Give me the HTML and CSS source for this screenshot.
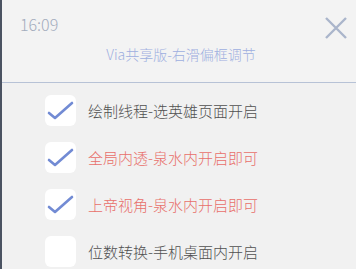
FILE: index.html
```html
<!DOCTYPE html>
<html lang="zh">
  <head>
    <meta charset="UTF-8" />
    <title>Via共享版</title>
    <link rel="stylesheet" href="styles.css">
  </head>

  <body>
    <div class="panel">
      <!-- 顶部 -->
      <div class="header">
        <div class="bar">
          <span class="time">16:09</span>
          <svg class="close" width="22" height="22" viewBox="0 0 22 22">
            <path d="M1 1 L21 21 M21 1 L1 21" stroke="#aab5cb" stroke-width="2.4" fill="none" />
          </svg>
        </div>
        <div class="title">Via共享版-右滑偏框调节</div>
      </div>

      <!-- 选项 -->
      <div class="list">
        <div class="item">
          <span class="box on"><svg viewBox="0 0 31 31"><path d="M4 18 L10 23 L27 8" /></svg></span>
          <span class="label">绘制线程-选英雄页面开启</span>
        </div>
        <div class="item red">
          <span class="box on"><svg viewBox="0 0 31 31"><path d="M4 18 L10 23 L27 8" /></svg></span>
          <span class="label">全局内透-泉水内开启即可</span>
        </div>
        <div class="item red">
          <span class="box on"><svg viewBox="0 0 31 31"><path d="M4 18 L10 23 L27 8" /></svg></span>
          <span class="label">上帝视角-泉水内开启即可</span>
        </div>
        <div class="item">
          <span class="box"></span>
          <span class="label">位数转换-手机桌面内开启</span>
        </div>
      </div>
    </div>
  </body>
</html>
```

FILE: styles.css
```css
body {
  margin: 0;
  padding: 0;
  background-color: #f1f1f1;
  font-family: "Noto Sans CJK SC", "Noto Sans", sans-serif;
}

.panel {
  width: 354px;
  height: 269px;
  border-left: 2px solid #4b5362;
  overflow: hidden;
}

.header {
  height: 83px;
  box-sizing: border-box;
  border-bottom: 1px solid #b7c2d6;
  background-color: #f3f3f3;
}

.bar {
  display: flex;
  justify-content: space-between;
  align-items: flex-start;
  padding: 15px 9px 0 18px;
}

.time {
  font-size: 16px;
  font-weight: 300;
  line-height: 19px;
  color: #a3acbd;
}

.close {
  display: block;
  margin-top: 2px;
}

.title {
  margin-top: 6px;
  text-align: center;
  padding-left: 4px;
  font-size: 14px;
  font-weight: 300;
  line-height: 18px;
  color: #9eafe0;
}

.list {
  display: flex;
  flex-direction: column;
  gap: 16px;
  padding: 12px 0 0 43px;
}

.item {
  display: flex;
  align-items: center;
  gap: 12px;
}

.box {
  width: 31px;
  height: 31px;
  border-radius: 6px;
  background-color: #fff;
  flex-shrink: 0;
}

.box svg {
  display: block;
  width: 31px;
  height: 31px;
}

.box path {
  fill: none;
  stroke: #728bd4;
  stroke-width: 2.6;
  stroke-linecap: round;
  stroke-linejoin: round;
}

.label {
  font-size: 15px;
  font-weight: 300;
  line-height: 20px;
  color: #505050;
}

.red .label {
  color: #e86f6a;
}
```
